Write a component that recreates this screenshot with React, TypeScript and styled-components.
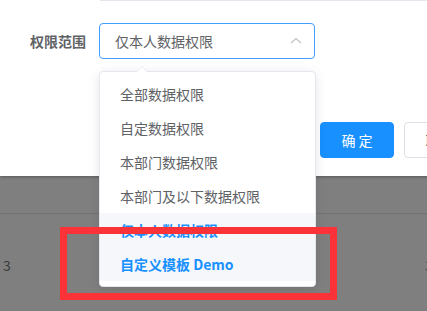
import React from 'react';
import styled, { createGlobalStyle } from 'styled-components';

const GlobalStyle = createGlobalStyle`
  html, body {
    margin: 0;
    padding: 0;
    background: #7f7f7f;
  }
  body {
    font-family: "Noto Sans CJK SC", "Liberation Sans", sans-serif;
  }
`;

const Screen = styled.div`
  position: relative;
  width: 427px;
  height: 311px;
  overflow: hidden;
  background: #7f7f7f;
`;

const Dialog = styled.section`
  width: 500px;
  height: 176px;
  background: #fff;
  box-sizing: border-box;
  box-shadow: 0 1px 3px rgba(0, 0, 0, 0.3);
  position: relative;
  z-index: 1;
  display: flex;
  flex-direction: column;
`;

const PrevInputEdge = styled.div`
  margin-left: 100px;
  height: 1px;
  background: #e4e7ed;
`;

const FormRow = styled.div`
  display: flex;
  align-items: center;
  margin-top: 22px;
  padding-left: 30px;
`;

const Label = styled.label`
  width: 57px;
  margin-right: 12px;
  font-size: 14px;
  font-weight: 700;
  color: #606266;
  line-height: 36px;
`;

const SelectBox = styled.div`
  width: 216px;
  height: 36px;
  box-sizing: border-box;
  border: 1px solid #409eff;
  border-radius: 4px;
  display: flex;
  align-items: center;
  justify-content: space-between;
  padding: 0 11px 0 15px;
  font-size: 14px;
  color: #606266;
`;

const Footer = styled.div`
  display: flex;
  justify-content: flex-end;
  gap: 10px;
  margin-top: 63px;
  padding-right: 22px;
`;

const Button = styled.button<{ $primary?: boolean }>`
  width: 74px;
  height: 36px;
  border-radius: 4px;
  font-family: inherit;
  font-size: 14px;
  line-height: 1;
  cursor: pointer;
  border: 1px solid ${(p) => (p.$primary ? '#1890ff' : '#dcdfe6')};
  background: ${(p) => (p.$primary ? '#1890ff' : '#fff')};
  color: ${(p) => (p.$primary ? '#fff' : '#606266')};
`;

const PageBehind = styled.div`
  color: #3a3a3a;
  font-size: 14px;
`;

const HeadRow = styled.div`
  height: 37px;
  border-bottom: 1px solid #737373;
`;

const BodyRow = styled.div`
  display: flex;
  justify-content: space-between;
  padding: 41px 0 0 3px;
  margin-right: -6px;
  line-height: 20px;
`;

const Dropdown = styled.div`
  position: absolute;
  left: 99px;
  top: 71px;
  width: 217px;
  box-sizing: border-box;
  background: #fff;
  border: 1px solid #e4e7ed;
  border-radius: 4px;
  box-shadow: 0 2px 12px rgba(0, 0, 0, 0.1);
  padding: 5px 0;
  z-index: 5;
  &::before {
    content: '';
    position: absolute;
    top: -12px;
    left: 36px;
    border: 6px solid transparent;
    border-bottom-color: #e4e7ed;
  }
  &::after {
    content: '';
    position: absolute;
    top: -11px;
    left: 36px;
    border: 6px solid transparent;
    border-bottom-color: #fff;
  }
`;

const Option = styled.div<{ $selected?: boolean; $hover?: boolean }>`
  height: 34px;
  line-height: 34px;
  padding: 0 20px;
  font-size: 14px;
  white-space: nowrap;
  color: ${(p) => (p.$selected ? '#1890ff' : '#606266')};
  font-weight: ${(p) => (p.$selected ? 700 : 400)};
  background: ${(p) => (p.$hover ? '#f5f7fa' : 'transparent')};
`;

const Annotation = styled.div`
  position: absolute;
  left: 60px;
  top: 227px;
  width: 277px;
  height: 73px;
  box-sizing: border-box;
  border: 7px solid #fb3238;
  z-index: 10;
`;

const options = [
  { label: '全部数据权限' },
  { label: '自定数据权限' },
  { label: '本部门数据权限' },
  { label: '本部门及以下数据权限' },
  { label: '仅本人数据权限', selected: true, hover: true },
  { label: '自定义模板 Demo', selected: true, hover: true },
];

export default function App() {
  return (
    <>
      <GlobalStyle />
      <Screen>
        <Dialog>
          <PrevInputEdge />
          <FormRow>
            <Label>权限范围</Label>
            <SelectBox>
              <span>仅本人数据权限</span>
              <svg width="14" height="14" viewBox="0 0 14 14">
                <polyline points="2,9 7,4.5 12,9" fill="none" stroke="#c0c4cc" strokeWidth="1.3" />
              </svg>
            </SelectBox>
          </FormRow>
          <Footer>
            <Button $primary>确 定</Button>
            <Button>取 消</Button>
          </Footer>
        </Dialog>
        <PageBehind>
          <HeadRow />
          <BodyRow>
            <span>3</span>
            <span>3</span>
          </BodyRow>
        </PageBehind>
        <Dropdown>
          {options.map((o) => (
            <Option key={o.label} $selected={o.selected} $hover={o.hover}>
              {o.label}
            </Option>
          ))}
        </Dropdown>
        <Annotation />
      </Screen>
    </>
  );
}
